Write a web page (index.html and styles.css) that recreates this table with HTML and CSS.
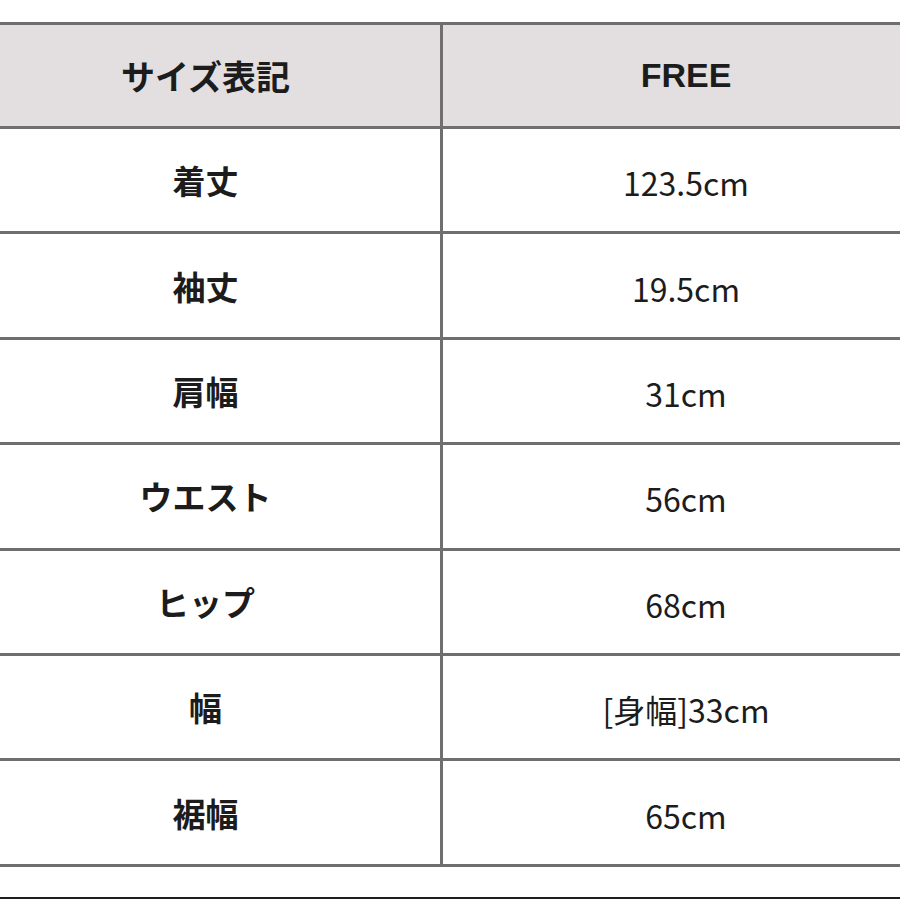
FILE: index.html
```html
<!DOCTYPE html>
<html lang="ja">
<head>
<meta charset="utf-8">
<title>サイズ表記</title>
<link rel="stylesheet" href="styles.css">
</head>
<body>
<div class="page">
  <div class="size-table">
    <div class="cell head label">サイズ表記</div>
    <div class="cell head value">FREE</div>
    <div class="cell label">着丈</div>
    <div class="cell value">123.5cm</div>
    <div class="cell label">袖丈</div>
    <div class="cell value">19.5cm</div>
    <div class="cell label">肩幅</div>
    <div class="cell value">31cm</div>
    <div class="cell label">ウエスト</div>
    <div class="cell value">56cm</div>
    <div class="cell label">ヒップ</div>
    <div class="cell value">68cm</div>
    <div class="cell label">幅</div>
    <div class="cell value">[身幅]33cm</div>
    <div class="cell label">裾幅</div>
    <div class="cell value">65cm</div>
  </div>
  <div class="bottom-rule"></div>
</div>
</body>
</html>
```
FILE: styles.css
```css
html, body {
  margin: 0;
  padding: 0;
  background: #ffffff;
}
body {
  width: 900px;
  height: 900px;
  overflow: hidden;
  font-family: "Noto Sans CJK JP", "Noto Sans", sans-serif;
  color: #1c1c1c;
}
.page {
  padding-top: 22px;
}
.size-table {
  display: grid;
  grid-template-columns: 472px 486px;
  grid-template-rows: 104px repeat(7, 105.4px);
  margin-left: -29px;
  width: 958px;
  border-top: 3px solid #6f6f6f;
}
.cell {
  display: flex;
  align-items: center;
  justify-content: center;
  border-bottom: 3px solid #6f6f6f;
  box-sizing: border-box;
}
.label {
  border-right: 3px solid #6f6f6f;
  font-weight: 700;
  font-size: 33px;
}
.value {
  font-size: 32px;
  font-weight: 400;
  padding-top: 4px;
}
.head {
  background: #e3dfe0;
}
.head.label {
  font-size: 34px;
}
.head.value {
  font-family: "Liberation Sans", "Noto Sans CJK JP", sans-serif;
  font-weight: 700;
  font-size: 34px;
  padding-top: 0;
}
.bottom-rule {
  margin-top: 30px;
  height: 2px;
  background: #1e1e1e;
}
```
